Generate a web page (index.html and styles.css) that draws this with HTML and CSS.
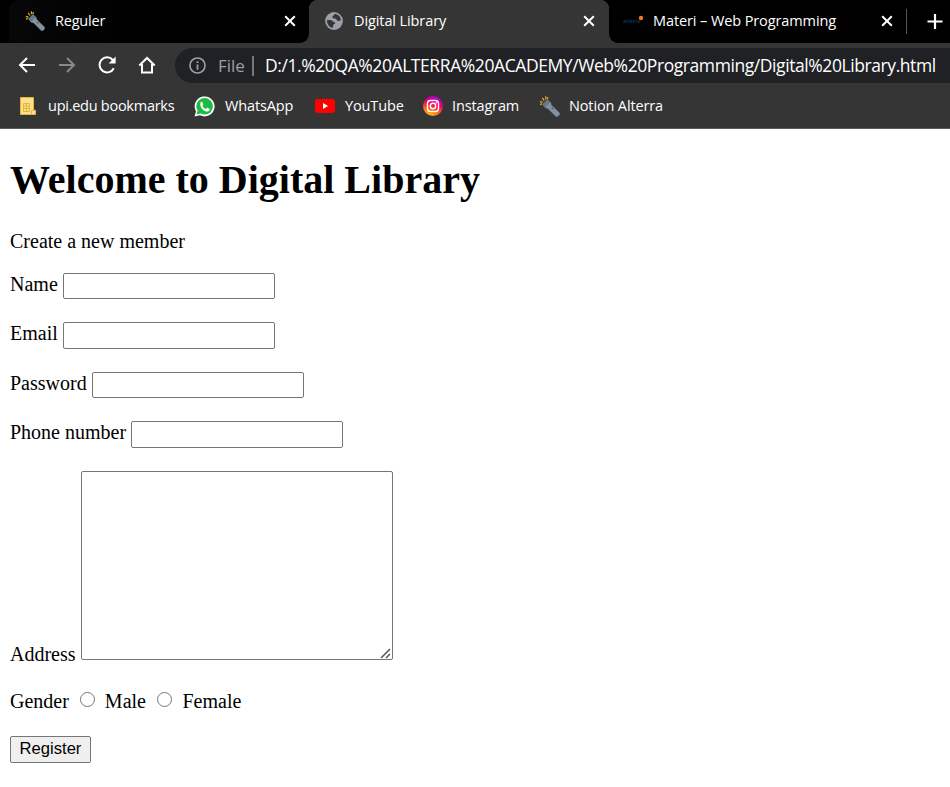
FILE: index.html
```
<!DOCTYPE html>
<html lang="en">
<head>
<meta charset="utf-8">
<title>Digital Library</title>
<link rel="stylesheet" href="styles.css">
</head>
<body>
<svg width="0" height="0" class="defs" aria-hidden="true">
  <symbol id="torch" viewBox="0 0 20 20">
    <path d="M.8 5.300l2.800.8M3.200 1.800l1.800 2.700M6.400.3l.1 3M1 8.200l1.800-.9M8.700 1.200l-1 1.700" stroke="#d9a22c" stroke-width="1.300" fill="none"/>
    <path d="M3.300 8L8 3.300l3.400 3.200.5 2 7.700 7.500c1 1.900-1.700 4.500-3.600 3.600L8.500 12.100l-2.300-.6z" fill="#82919d"/>
    <path d="M3.300 8L8 3.300l2.700 2.600-4.600 4.900z" fill="#657684"/>
    <path d="M12.200 11.200l1.300 1.200" stroke="#4a5a66" stroke-width="1.200"/>
  </symbol>
  <symbol id="close" viewBox="0 0 12 12"><path d="M1.200 1.200l9.600 9.600M10.800 1.200L1.200 10.800" stroke="#fff" stroke-width="2"/></symbol>
</svg>
<header class="browser">
  <div class="tabs">
    <div class="tab first"><svg class="fav"><use href="#torch"/></svg><span class="t1">Reguler</span><svg class="x"><use href="#close"/></svg></div>
    <div class="tab active">
      <svg class="globe" viewBox="0 0 18 18"><circle cx="9" cy="9" r="8.900" fill="#9aa0a6"/><path d="M2 8.200c2.500-.2 4.600-.1 5.600 1 .9 1.100 2.400.5 2.600 1.800.2 1.200-1.900 1-2.100 2.300-.1.900.1 1.600-.2 2.500C4.600 15.500 2 12.600 2 8.200zM9.500 2c2.200 0 4.200 1.200 5.300 2.800.5.900 1 2 1.100 3.200-.9.900-2.400 1.200-3.600.6-1.200-.7-.7-1.900-2-2.100-1.500-.1-2.900-.2-2.900-1.500C7.400 3.800 9.300 3.600 9.500 2z" fill="#353535"/></svg>
      <span class="t2">Digital Library</span><svg class="x"><use href="#close"/></svg></div>
    <div class="tab last"><svg class="alterra" viewBox="0 0 22 14"><text x="1" y="9" class="brand">alterra</text><circle cx="19" cy="4" r="2.200" fill="#f47721"/></svg><span class="t3">Materi – Web Programming</span><svg class="x"><use href="#close"/></svg></div>
    <i class="sep"></i>
    <svg class="plus" viewBox="0 0 16 16"><path d="M8 .5v15M.5 8h15" stroke="#fff" stroke-width="2.200"/></svg>
  </div>
  <div class="toolbar">
    <svg class="nav" viewBox="0 0 18 18"><path d="M17 9H2.500M9 2L2 9l7 7" fill="none" stroke="#fff" stroke-width="2"/></svg>
    <svg class="nav" viewBox="0 0 18 18"><path d="M1 9h14.500M9 2l7 7-7 7" fill="none" stroke="#888" stroke-width="2"/></svg>
    <svg class="nav" viewBox="0 0 18 18"><path d="M15.800 12.200A7.500 7.500 0 1 1 14.800 4" fill="none" stroke="#fff" stroke-width="2"/><path d="M17.600.5v7h-7z" fill="#fff"/></svg>
    <svg class="nav" viewBox="0 0 18 18"><path d="M1.300 9.500L9 2l7.700 7.500M4 8v8.500h10V8" fill="none" stroke="#fff" stroke-width="2"/></svg>
    <div class="url">
      <svg class="info" viewBox="0 0 16 16"><circle cx="8" cy="8" r="7.100" fill="none" stroke="#9aa0a6" stroke-width="1.500"/><path d="M8 7v5M8 4v1.700" stroke="#9aa0a6" stroke-width="1.700"/></svg>
      <span class="file">File</span><i class="bar"></i><span class="path">D:/1.%20QA%20ALTERRA%20ACADEMY/Web%20Programming/Digital%20Library.html</span>
    </div>
  </div>
  <nav class="marks">
    <span class="mark m1"><svg viewBox="0 0 16 18" width="16" height="18"><path d="M.5.5h13v12.700h2v4.300H.5z" fill="#ffe08a" stroke="#dfb63e"/><path d="M3.500 6.500h6v8h-6zM3.500 9h6M3.500 11.500h6M6.500 6.500v8M11.500 17v-3.500h2" fill="none" stroke="#dfb63e"/></svg><span>upi.edu bookmarks</span></span>
    <span class="mark m2"><svg viewBox="0 0 21 21" width="21" height="21"><path d="M.5 20.500l1.500-5A10 10 0 1 1 6 19.300z" fill="#fff"/><circle cx="10.600" cy="10.300" r="8.300" fill="#1fba45"/><path d="M2.500 18.500l1-4 3 3z" fill="#1fba45"/><path d="M6.500 6.500c.8-1.200 1.700-.9 2 0l.7 1.700c.2.600-.9 1.300-.7 1.700.8 1.400 1.800 2.300 3.200 2.900.6.200 1.100-1.300 1.700-1.100l2 1c.8.400-.1 2.300-1.500 2.700-3.700 1-8.900-4.700-7.400-8.900z" fill="#fff"/></svg><span>WhatsApp</span></span>
    <span class="mark m3"><svg viewBox="0 0 20 14" width="20" height="14"><rect width="20" height="14" rx="3" fill="#f00"/><path d="M8 4l5 3-5 3z" fill="#fff"/></svg><span>YouTube</span></span>
    <span class="mark m4"><svg viewBox="0 0 20 20" width="20" height="20"><defs><linearGradient id="g" x1=".3" y1="1" x2=".65" y2="0"><stop offset="0" stop-color="#ffc51b"/><stop offset=".3" stop-color="#ff671b"/><stop offset=".6" stop-color="#ee0067"/><stop offset="1" stop-color="#a800db"/></linearGradient></defs><circle cx="10" cy="10" r="10" fill="url(#g)"/><rect x="4.500" y="4.500" width="11" height="11" rx="3" fill="none" stroke="#fff" stroke-width="1.400"/><circle cx="10" cy="10" r="2.700" fill="none" stroke="#fff" stroke-width="1.400"/><circle cx="13.200" cy="6.800" r=".8" fill="#fff"/></svg><span>Instagram</span></span>
    <span class="mark m5"><svg width="21" height="21"><use href="#torch"/></svg><span>Notion Alterra</span></span>
  </nav>
</header>
<main>
  <h1>Welcome to Digital Library</h1>
  <p>Create a new member</p>
  <form>
    <div class="row"><label for="name">Name</label><input id="name" type="text"></div>
    <div class="row tall"><label for="email">Email</label><input id="email" type="text"></div>
    <div class="row"><label for="pass">Password</label><input id="pass" type="password"></div>
    <div class="row tall"><label for="phone">Phone number</label><input id="phone" type="text"></div>
    <div class="row address"><label for="address">Address</label>
      <div class="area"><textarea id="address"></textarea><svg class="grip" viewBox="0 0 11 11"><path d="M1 10l9-9M6 10l4-4" stroke="#555" stroke-width="1.500" stroke-dasharray="20 0"/></svg></div>
    </div>
    <div class="gender"><span class="g0">Gender</span><input type="radio" name="gender" id="male"><label class="g1" for="male">Male</label><input type="radio" name="gender" id="female"><label for="female">Female</label></div>
    <button type="button">Register</button>
  </form>
</main>
</body>
</html>
```
FILE: styles.css
```
* { box-sizing: border-box; }
body { margin: 0; background: #fff; color: #000; height: 787px; overflow: hidden; }
svg { display: block; flex: none; }
.defs { position: absolute; }
.browser { height: 129px; background: #353535; border-bottom: 1px solid #5b5b5b; color: #fff; font: 14.5px/20px "Open Sans", sans-serif; white-space: nowrap; overflow: hidden; }
.tabs { display: flex; height: 43px; background: linear-gradient(90deg, #000 20px, transparent 20px) 0 0 / 100% 20px no-repeat #353535; }
.tabs::before { content: ""; width: 9px; background: #000; }
.tab { height: 43px; display: flex; align-items: center; background: #000; padding-bottom: 1px; }
.tab .x { width: 12px; height: 12px; margin-left: auto; }
.first { width: 300px; padding-left: 16px; padding-right: 13px; background: linear-gradient(90deg, #070707, #000 40%); border-radius: 9px 0 9px 0; }
.active { width: 300px; padding-left: 16px; padding-right: 14px; background: radial-gradient(circle at 9px 9px, #353535 9px, #000 9.5px) 0 0 / 9px 9px no-repeat, radial-gradient(circle at 0 9px, #353535 9px, #000 9.5px) 100% 0 / 9px 9px no-repeat, #353535; }
.last { width: 284px; padding-left: 13px; border-bottom-left-radius: 9px; }
.tab span { letter-spacing: -0.1px; }
.tab .t1 { letter-spacing: -0.2px; }
.fav { width: 20px; height: 20px; margin-right: 10px; }
.globe { width: 18px; height: 18px; margin-right: 11px; }
.alterra { width: 22px; height: 14px; margin-right: 9px; }
.brand { font: bold 5px "Open Sans", sans-serif; fill: #14305c; }
.sep { width: 57px; background: linear-gradient(#555, #555) 13px 9px / 1px 25px no-repeat #000; }
.plus { width: 16px; height: 43px; margin-left: -23px; }
.toolbar { display: flex; align-items: center; height: 45px; padding-left: 18px; gap: 22px; }
.nav { width: 18px; height: 18px; margin-top: -1px; }
.url { flex: 1; display: flex; align-items: center; height: 35px; margin-left: -3px; padding-left: 14px; background: #202124; border-radius: 18px 0 0 18px; font-size: 17.500px; }
.info { width: 17px; height: 17px; margin-right: 12px; }
.file { color: #9aa0a6; width: 34px; font-size: 17px; }
.bar { width: 2px; height: 20px; background: #777; margin-right: 11px; }
.path { letter-spacing: -0.42px; margin-top: -1px; }
.marks { display: flex; align-items: center; height: 36px; }
.mark { display: flex; align-items: center; letter-spacing: -0.14px; flex: none; }
.m1 { width: 174px; padding-left: 20px; gap: 12px; letter-spacing: -0.26px; }
.m2 { width: 121px; margin-left: 20px; gap: 10px; }
.m3 { width: 108px; gap: 10px; }
.m4 { width: 116px; gap: 9px; }
.m5 { gap: 9px; }
main { padding: 26px 10px 0; font: 20px/22px "Liberation Serif", "Times New Roman", serif; white-space: nowrap; }
h1 { margin: 0; font-size: 40px; line-height: 50px; font-weight: bold; }
p { margin: 25px 0 21px; height: 22px; }
.row { display: flex; gap: 5px; height: 26.500px; margin-bottom: 22.900px; }
.row input { width: 212px; height: 26px; margin: 0; border: 1px solid #767676; border-radius: 2px; }
.tall input { height: 27px; }
.row.address { height: 189px; margin-bottom: 30px; }
.address label { align-self: flex-end; margin-bottom: -5px; }
.area { position: relative; width: 312px; height: 189px; }
textarea { display: block; width: 100%; height: 100%; margin: 0; border: 1px solid #767676; border-radius: 2px; resize: none; }
.grip { position: absolute; right: 2px; bottom: 1px; width: 11px; height: 11px; }
.gender { display: flex; height: 22px; margin-bottom: 24px; }
.gender input { width: 15px; height: 15px; margin: 2px 10px 0 11px; }
.g1 { margin-right: 0.5px; }
button { display: block; width: 81px; height: 27px; padding: 0 0 1px; border: 1px solid #767676; border-radius: 2px; background: #efefef; color: #000; font: 16.600px "Liberation Sans", Arial, sans-serif; }
```
